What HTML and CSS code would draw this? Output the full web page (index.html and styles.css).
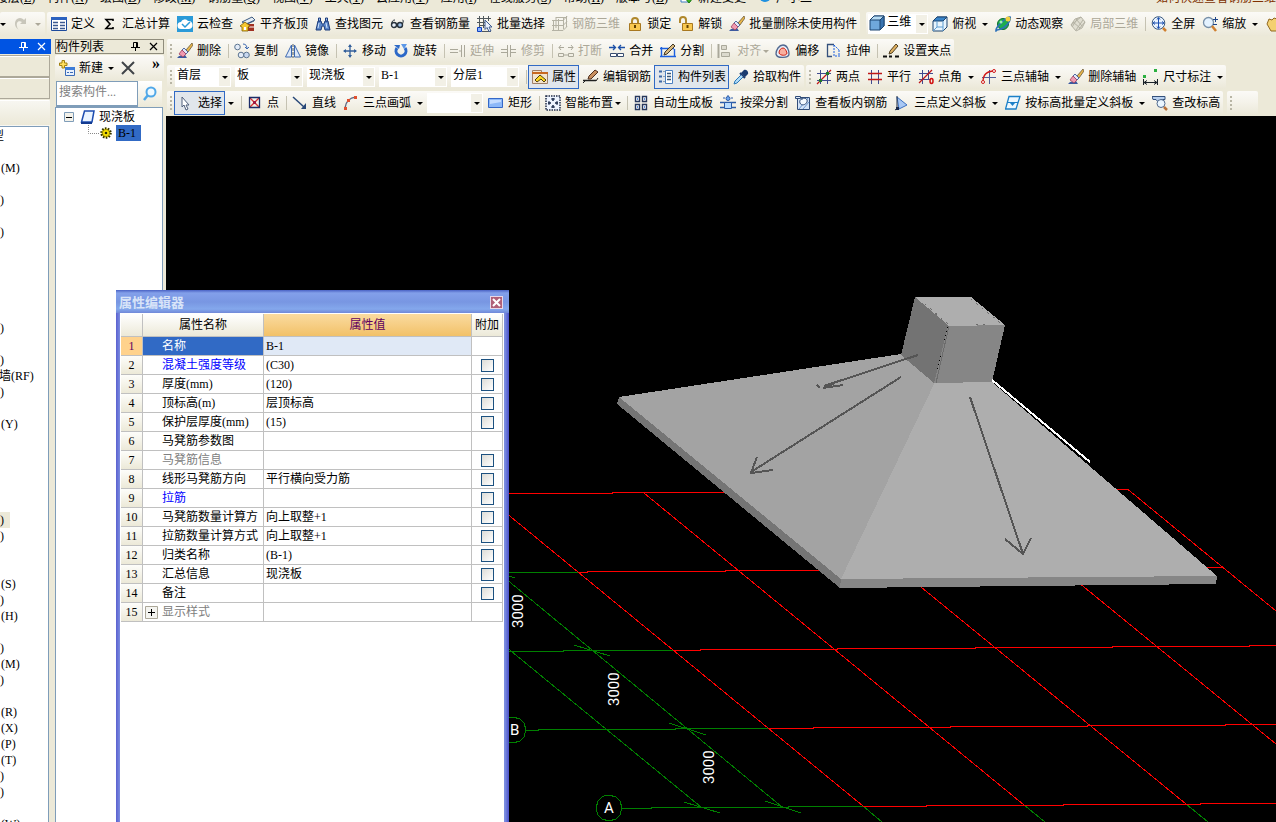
FILE: index.html
```html
<!DOCTYPE html>
<html lang="zh-CN">
<head>
<meta charset="utf-8">
<title>钢筋算量</title>
<link rel="stylesheet" href="styles.css">
</head>
<body>
<svg class="defs" aria-hidden="true">
  <symbol id="brush" viewBox="0 0 16 16"><path d="M0 15h10l-2-3-6 1z" fill="#3c5aa0"/><path d="M15 0L9 7l2 2 5-7z" fill="#e8b64a" stroke="#5a4a30" stroke-width=".7"/><path d="M7 5l4 4-2 2-4-4z" fill="#dfe8f8" stroke="#2c4a90" stroke-width=".8"/><path d="M5 7l4 4-3 3-4-3z" fill="#f09ab0" stroke="#a04060" stroke-width=".8"/></symbol>
  <symbol id="pin" viewBox="0 0 9 9"><path d="M2.500 .5h4v5M2.500 .5v5M5.500 .5v5M0 5.500h9M4.500 5.500v3.500" fill="none" stroke="currentColor"/></symbol>
  <symbol id="cross" viewBox="0 0 9 9"><path d="M1 1l7 7M8 1l-7 7" fill="none" stroke="currentColor" stroke-width="1.200"/></symbol>
  <symbol id="cube" viewBox="0 0 16 16"><path d="M1 5l4-4h10v10l-4 4H1z" fill="#6fa8dc" stroke="#1c4470"/><path d="M1 5l4-4h10l-4 4z" fill="#b8dcf4" stroke="#1c4470"/><path d="M11 5v10l4-4V1z" fill="#3a74b0" stroke="#1c4470"/></symbol>
</svg>

<nav class="menu">
  <span>楼层(<u>L</u>)</span><span>构件(<u>N</u>)</span><span>绘图(<u>D</u>)</span><span>修改(<u>M</u>)</span><span>钢筋量(<u>Q</u>)</span><span>视图(<u>V</u>)</span><span>工具(<u>T</u>)</span><span>云应用(<u>Y</u>)</span><span>应用(<u>I</u>)</span><span>在线服务(<u>S</u>)</span><span>帮助(<u>H</u>)</span><span>版本号(<u>B</u>)</span>
  <span class="mark"><svg width="14" height="14"><path d="M1 1h9v11H1z" fill="#fff" stroke="#3c7ac0"/><path d="M5 8h8l-4 5z" fill="#3cb420" stroke="#1c7a10"/></svg>新建变更</span>
  <span class="mark"><svg width="14" height="14"><circle cx="7" cy="6" r="6" fill="#1e90e0"/></svg>广小二</span>
  <span class="notice">如何快速查看钢筋三维</span>
</nav>

<div class="row top">
  <div class="group lead">
    <button class="drop" aria-label="撤销列表"></button>
    <button class="tool off" aria-label="重做"><svg width="16" height="16"><path d="M13 2v6H7l2-2c-3-2-6 0-5 4 0 2 1 3 2 4-6-3-5-12 1-12 2 0 3 1 4 2z" fill="#c8c6ba"/></svg></button>
    <button class="drop off" aria-label="重做列表"></button>
  </div>
  <div class="group">
    <button class="tool"><svg width="16" height="16"><path d="M.5 1.500h15v13H.5z" fill="#fff" stroke="#1c4a9c"/><path d="M0 1h16v3H0z" fill="#2c62c0"/><path d="M2 6.500h5M2 9.500h5M2 12.500h5M9 6.500h5M9 9.500h5M9 12.500h5" stroke="#3c5a90" stroke-width="1.500"/></svg>定义</button>
    <button class="tool"><svg width="16" height="16"><path d="M11 5V3.500H4L8 8l-4 4.500h7V11" fill="none" stroke="#000" stroke-width="1.600"/></svg>汇总计算</button>
    <button class="tool"><svg width="16" height="16"><path d="M0 0h16v16H0z" fill="#2a9ad8"/><path d="M4 13a3.500 3.500 0 0 1 0-7 4 4 0 0 1 7-1 4 4 0 0 1 1 8z" fill="#fff"/><path d="M5 8l3 3 5-5" fill="none" stroke="#2a9ad8" stroke-width="1.500"/></svg>云检查</button>
    <button class="tool"><svg width="16" height="16"><path d="M2 6l10-5 3 3-9 4z" fill="#e4ecf4" stroke="#3c5a80"/><path d="M5 9l9-4" stroke="#3c5a80"/><path d="M8 8h6v7H8z" fill="#a03020"/><path d="M9 11h5" stroke="#fff"/><path d="M0 10l5-4 5 4-2 1v4H2v-4z" fill="#f6c830" stroke="#806000" stroke-width=".8"/><path d="M4 11h2v3H4z" fill="#fff"/></svg>平齐板顶</button>
    <button class="tool"><svg width="16" height="16"><path d="M1 14l2-9h3l1 3h2l1-3h3l2 9h-5l-1-4H7l-1 4z" fill="#5a86c8" stroke="#1c3c7c"/><path d="M3.500 2h2v3h-2zM10.500 2h2v3h-2z" fill="#9cc0f0" stroke="#1c3c7c"/><path d="M4 7l-1 5M11 7l1 5" stroke="#d0e4ff"/></svg>查找图元</button>
    <button class="tool"><svg width="16" height="16"><circle cx="4" cy="9" r="2.500" fill="#e8f0fa" stroke="#28323c" stroke-width="1.400"/><circle cx="10" cy="9" r="2.500" fill="#9cc0e8" stroke="#28323c" stroke-width="1.400"/><path d="M6 8.500h2M1.500 8C2 5 3 4 5 4M12.500 8c1-3 1-4 0-4" fill="none" stroke="#28323c"/></svg>查看钢筋量</button>
    <button class="tool"><svg width="16" height="16"><path d="M2.500 0v12M6.500 0v12M11.500 0v5M0 2.500h14M0 6.500h8M3 9.500h6M5 15.500h9" stroke="#50585c"/><path d="M.5 11.500h4v4h-4z" fill="#88b4ff" stroke="#1040c0"/><path d="M8 4l7 7H12l2 4-2 .5-2-4-2 2z" fill="#eaf2ff" stroke="#3c5a90"/></svg>批量选择</button>
    <button class="tool off"><svg width="16" height="16"><path d="M1.500 4v11M6.500 3v12M11.500 1v12M14.500 0v11M0 4.500h11l4-4M0 9.500h11l4-4M0 14.500h11l4-4M4 1v11M4 1.500h11" fill="none" stroke="#b4b2a4"/></svg>钢筋三维</button>
    <button class="tool"><svg width="16" height="16"><path d="M5 7V5a3 3 0 0 1 6 0v2" fill="none" stroke="#b0882c" stroke-width="2"/><path d="M2.500 7.500h11v7h-11z" fill="#f8c850" stroke="#a87820"/><path d="M8 9v3" stroke="#604000" stroke-width="2"/></svg>锁定</button>
    <button class="tool"><svg width="16" height="16"><path d="M2 7V4a3 3 0 0 1 6 0v3" fill="none" stroke="#b0882c" stroke-width="2"/><path d="M4.500 7.500h10v7h-10z" fill="#f8c850" stroke="#a87820"/><path d="M9.500 9v3" stroke="#604000" stroke-width="2"/></svg>解锁</button>
    <button class="tool"><svg width="16" height="16"><use href="#brush"/></svg>批量删除未使用构件</button>
  </div>
  <div class="group views">
    <label class="combo view"><svg width="16" height="16"><use href="#cube"/></svg><select aria-label="视图模式"><option>三维</option></select></label>
    <button class="tool"><svg width="16" height="16"><path d="M1 5l4-4h10v10l-4 4H1z" fill="#e8f4fc" stroke="#1c4470"/><path d="M1 5l4-4h10l-4 4z" fill="#3a84c8" stroke="#1c4470"/><path d="M11 5v10M5 5v6l-4 4M5 11h6" stroke="#5c9cd0" fill="none"/></svg>俯视</button><button class="drop" aria-label="俯视选项"></button>
    <button class="tool"><svg width="16" height="16"><circle cx="8" cy="8" r="5.500" fill="#1cae4c" stroke="#0c6c2c"/><path d="M1 15C0 11 13 0 15 1s-3 12-13 13z" fill="none" stroke="#2c70b8" stroke-width="1.500"/><circle cx="13" cy="3" r="2.500" fill="#f0d040"/><circle cx="6" cy="6" r="1.500" fill="#a0f0b0"/></svg>动态观察</button>
    <button class="tool off"><svg width="16" height="16"><path d="M1 9l4-6 6-2 4 5-3 6-6 3z" fill="#e0ded2" stroke="#b4b2a4"/><path d="M3 6l7 6M6 3l6 7M2 11l6-9M6 14l7-10M1 9l10-8M9 13l6-7" fill="none" stroke="#b4b2a4"/></svg>局部三维</button>
    <i class="sep"></i>
    <button class="tool"><svg width="16" height="16"><circle cx="7.500" cy="7" r="6.300" fill="#eaf4ff" stroke="#385880"/><path d="M7.500 2v10M2.500 7h10M6 3.500l1.500-2 1.500 2M6 10.500l1.500 2 1.500-2M4 5.500L2 7l2 1.500M11 5.500L13 7l-2 1.500" fill="none" stroke="#1c50b0"/><path d="M12 12l3 3" stroke="#d08030" stroke-width="2.500"/></svg>全屏</button>
    <button class="tool"><svg width="16" height="16"><circle cx="6.500" cy="6.500" r="5" fill="#e4f2ff" stroke="#7890a8" stroke-width="1.300"/><path d="M10 10l4 5" stroke="#d08030" stroke-width="2.500"/><path d="M11 3.500h5M13.500 1v5M11 8.500h4" stroke="#1c4488"/></svg>缩放</button><button class="drop" aria-label="缩放选项"></button>
    <button class="tool" aria-label="平移"><svg width="16" height="16"><path d="M2 8l2-5 3 1 2-2 3 1 2 3v9H6z" fill="#f4d070" stroke="#906820"/></svg></button>
  </div>
</div>

<div class="work">
  <aside class="dock">
    <header><svg width="9" height="9"><use href="#pin"/></svg><svg width="9" height="9"><use href="#cross"/></svg></header>
    <div class="slot"></div><div class="slot"></div><div class="slot pale"></div>
    <ul>
      <li>型</li><li></li><li class="key">(M)</li><li></li><li>)</li><li></li><li>)</li><li></li><li></li><li></li><li></li><li></li><li>)</li><li></li><li>)</li><li class="wide">墙(RF)</li><li>)</li><li></li><li class="key">(Y)</li><li></li><li></li><li></li><li></li><li></li><li><mark>)</mark></li><li>)</li><li></li><li></li><li class="key">(S)</li><li>)</li><li class="key">(H)</li><li></li><li>)</li><li class="key">(M)</li><li>)</li><li></li><li class="key">(R)</li><li class="key">(X)</li><li class="key">(P)</li><li class="key">(T)</li><li>)</li><li>)</li><li></li><li class="key">(W)</li>
    </ul>
  </aside>

  <aside class="parts">
    <header><span>构件列表</span><svg width="9" height="9"><use href="#pin"/></svg><svg width="9" height="9"><use href="#cross"/></svg></header>
    <div class="group partbar">
      <button class="tool"><svg width="17" height="17"><path d="M6.500 7.500h9v8h-9z" fill="#e8f0fc" stroke="#3c6cb8"/><path d="M6 7h10v3H6z" fill="#3c7cd8"/><path d="M8 12.500h2M11 12.500h3" stroke="#3c6cb8"/><path d="M3 .5h2.500V3H8v2.500H5.500V8H3V5.500H.5V3H3z" fill="#ffe060" stroke="#a08010"/></svg>新建</button><button class="drop slim" aria-label="新建选项"></button>
      <button class="tool" aria-label="删除"><svg width="16" height="16"><path d="M2 2l12 12M14 2L2 14" stroke="#404448" stroke-width="2"/></svg></button>
      <button class="more" aria-label="更多">»</button>
    </div>
    <div class="find"><input type="text" placeholder="搜索构件..." aria-label="搜索构件"><button aria-label="搜索"><svg width="16" height="16"><circle cx="9" cy="6" r="4.500" fill="#f0faff" stroke="#50a8e8" stroke-width="2"/><path d="M6 9l-4 5" stroke="#50a8e8" stroke-width="2.500"/></svg></button></div>
    <div class="tree">
      <div class="node"><svg width="10" height="10"><path d="M.5 .5h9v9h-9z" fill="#f4f2ea" stroke="#7f9db9"/><path d="M2 5.500h6" stroke="#000"/></svg><svg width="15" height="14"><path d="M4.500 1h9.500l-2 11H1.500z" fill="#eaf4ff" stroke="#1c4cb0" stroke-width="1.500"/><path d="M1 13h11" stroke="#123a90" stroke-width="2"/></svg>现浇板</div>
      <div class="node child"><svg width="12" height="16"><path d="M.5 0v8.500h11" fill="none" stroke="#888" stroke-dasharray="1 1"/></svg><svg width="12" height="12"><circle cx="6" cy="6" r="4.500" fill="#ffe600" stroke="#303000" stroke-width="2.500" stroke-dasharray="1.500 1.300"/><circle cx="6" cy="6" r="3.500" fill="#ffe600" stroke="#605800" stroke-width=".5"/><circle cx="6" cy="6" r="1.300" fill="#303000"/></svg><b>B-1</b></div>
    </div>
  </aside>

  <main>
    <div class="row">
      <div class="group"><i class="grip"></i>
        <button class="tool"><svg width="16" height="16"><use href="#brush"/></svg>删除</button><i class="sep"></i>
        <button class="tool"><svg width="16" height="16"><circle cx="3.500" cy="4" r="2.800" fill="#e4ecf8" stroke="#5c7490"/><circle cx="7" cy="12" r="2.800" fill="#e4ecf8" stroke="#5c7490"/><circle cx="12.500" cy="12" r="2.800" fill="#c8d8f0" stroke="#5c7490"/><path d="M9 1c3 0 4 2 4 5M11 4l2 2 2-2" fill="none" stroke="#3c68b0"/></svg>复制</button>
        <button class="tool"><svg width="16" height="16"><path d="M6.500 2v12h-6zM9.500 2v12h6z" fill="#dce8f8" stroke="#3c68b0"/><path d="M8 1v14" stroke="#50585c" stroke-dasharray="3 1"/></svg>镜像</button><i class="sep"></i>
        <button class="tool"><svg width="16" height="16"><path d="M8 2v12M2 8h12" stroke="#34609c" stroke-width="1.300"/><path d="M8 1l2 3H6zM8 15l2-3H6zM1 8l3-2v4zM15 8l-3-2v4z" fill="#34609c"/></svg>移动</button>
        <button class="tool"><svg width="16" height="16"><path d="M4 5a5 5 0 1 0 8 0" fill="none" stroke="#2c68c8" stroke-width="3"/><path d="M8 1h6l-3 5z" fill="#5c98e8"/><path d="M1 2h6L6 6z" fill="#2c68c8"/></svg>旋转</button><i class="sep"></i>
        <button class="tool off"><svg width="16" height="16"><path d="M0 6.500h8M0 9.500h8M11.500 2v12M14.500 2v12M9 8h2" stroke="#aaa89a"/></svg>延伸</button>
        <button class="tool off"><svg width="16" height="16"><path d="M0 6.500h6M0 9.500h6M10 6.500h5M10 9.500h5" stroke="#aaa89a"/><path d="M6.500 2v12M9.500 2v12" stroke="#aaa89a"/></svg>修剪</button><i class="sep"></i>
        <button class="tool off"><svg width="16" height="16"><path d="M1 4.500h5M10 4.500h5M3 2L1 4.500 3 7M13 2l2 2.500L13 7" fill="none" stroke="#aaa89a"/><path d="M.5 10.500h5v3h-5zM10.500 10.500h5v3h-5zM6 12h4" fill="none" stroke="#aaa89a"/></svg>打断</button>
        <button class="tool"><svg width="16" height="16"><path d="M0 4.500h6M16 4.500h-6M4 2l2.500 2.500L4 7M12 2L9.500 4.500 12 7" fill="none" stroke="#1c50a8" stroke-width="1.300"/><path d="M1.500 10.500h6v3h-6zM8.500 10.500h6v3h-6z" fill="#fff" stroke="#384c70"/></svg>合并</button>
        <button class="tool"><svg width="16" height="16"><path d="M0 5.500h14M1.500 4v10M14.500 6v8M0 13.500h16" fill="none" stroke="#1c60e0" stroke-width="1.400"/><path d="M4 12l1-3 8-8 2 2-8 8z" fill="#d8b880" stroke="#403828"/></svg>分割</button><i class="sep"></i>
        <button class="tool off tight"><svg width="16" height="16"><path d="M1.500 1v14" stroke="#aaa89a" stroke-width="2"/><path d="M4.500 2.500h5v4h-5zM4.500 9.500h8v4h-8z" fill="#dcdace" stroke="#aaa89a"/></svg>对齐</button><button class="drop off slim" aria-label="对齐选项"></button>
        <button class="tool"><svg width="16" height="16"><path d="M1 11c0-4 3-9 7-9s6 5 6 9-12 5-13 0z" fill="#e8eef8" stroke="#506890" stroke-width="1.300"/><path d="M4 10c0-3 2-5 4-5s3 2 4 5c0 3-7 3-8 0z" fill="#f8b0a0" stroke="#d02010"/></svg>偏移</button>
        <button class="tool"><svg width="16" height="16"><path d="M8 1.500H1.500v12H6" fill="none" stroke="#34507c" stroke-width="1.300"/><path d="M8 2l5 5M8 2v11h6M13 7v6" fill="none" stroke="#1c60e0" stroke-dasharray="2 1"/></svg>拉伸</button><i class="sep"></i>
        <button class="tool"><svg width="16" height="16"><path d="M0 13.500h4M12 13.500h4M6 13.500h3" stroke="#101010" stroke-width="2"/><path d="M6 11l1-3 6-7 2 2-6 7z" fill="#e0b060" stroke="#504020"/></svg>设置夹点</button>
      </div>
    </div>

    <div class="row">
      <div class="group"><i class="grip"></i>
        <div class="combos">
          <label class="combo floor"><select aria-label="楼层"><option>首层</option></select></label>
          <label class="combo"><select aria-label="构件类型"><option>板</option></select></label>
          <label class="combo"><select aria-label="构件种类"><option>现浇板</option></select></label>
          <label class="combo"><select aria-label="构件"><option>B-1</option></select></label>
          <label class="combo"><select aria-label="分层"><option>分层1</option></select></label>
        </div><i class="sep"></i>
        <button class="tool on"><svg width="16" height="16"><path d="M.5 1.500h9v2h6v11H.5z" fill="#f4e4cc" stroke="#a08068"/><path d="M0 4h16" stroke="#c86820" stroke-width="2"/><path d="M3 11l5-5 6 5-2 2-3-3-4 3z" fill="#ffd820" stroke="#504010"/></svg>属性</button>
        <button class="tool"><svg width="16" height="16"><path d="M0 11.500h13" stroke="#202020" stroke-width="1.500"/><path d="M0 14l3-3M15 9l-2 3" stroke="#202020"/><path d="M5 10l1-3 6-6 3 2-7 7z" fill="#c89060" stroke="#503020"/></svg>编辑钢筋</button>
        <button class="tool on"><svg width="16" height="16"><path d="M7.500 1.500h7v13h-7z" fill="#fff" stroke="#4c80c0"/><path d="M9 4.500h4M9 7.500h4M9 10.500h4" stroke="#3c5878" stroke-width="1.500"/><path d="M1 2.500h3M1 7.500h3M1 12.500h3" stroke="#3c68a8" stroke-width="2"/><path d="M5 2.500h2M5 7.500h2M5 12.500h2" stroke="#90a0b0"/></svg>构件列表</button>
        <button class="tool"><svg width="16" height="16"><path d="M10 2c2-3 6 0 5 3l-3 3-4-4z" fill="#1c3c70"/><path d="M7 4l5 5" stroke="#1c3c70" stroke-width="2"/><path d="M8 6L2 12l-1 3 3-1 6-6" fill="#b0dcf8" stroke="#2c78b8"/></svg>拾取构件</button>
      </div>
      <div class="group next"><i class="grip"></i>
        <button class="tool"><svg width="16" height="16"><path d="M4.500 1v14M11.500 1v14M1 4.500h14M1 11.500h14" stroke="#404c90"/><path d="M1 15L15 1" stroke="#c01818" stroke-width="1.300"/><path d="M3 10h3v3H3zM10 3h3v3h-3z" fill="#207828"/></svg>两点</button>
        <button class="tool"><svg width="16" height="16"><path d="M4.500 1v14M11.500 1v14" stroke="#404c90"/><path d="M1 4.500h14M1 10.500h14" stroke="#c01818" stroke-width="1.400"/></svg>平行</button>
        <button class="tool"><svg width="16" height="16"><path d="M4.500 1v14M10.500 1v9M1 4.500h14M1 10.500h11" stroke="#404c90"/><path d="M1 14L14 1" stroke="#c01818" stroke-width="1.300"/><ellipse cx="13.500" cy="12" rx="1.500" ry="2.500" fill="none" stroke="#d01010" stroke-width="1.500"/></svg>点角</button><button class="drop" aria-label="点角选项"></button>
        <button class="tool"><svg width="16" height="16"><path d="M8.500 1v14M1 8.500h14" stroke="#505c98"/><path d="M2 13C2 6 6 2 13 2" fill="none" stroke="#d01818" stroke-width="1.300"/><circle cx="2" cy="13" r="1.500" fill="#fff" stroke="#d01818"/><circle cx="13" cy="2" r="1.500" fill="#fff" stroke="#d01818"/></svg>三点辅轴</button><button class="drop" aria-label="三点辅轴选项"></button>
        <button class="tool"><svg width="16" height="16"><use href="#brush"/></svg>删除辅轴</button>
        <button class="tool"><svg width="16" height="16"><path d="M0 6h3v3H0zM11 0h3v3h-3z" fill="#2cb040"/><path d="M.5 10v6M14.500 10v6M1 13.500h13M4 11.500l-3 2L4 15.500M11 11.500l3 2-3 2" fill="none" stroke="#182028"/></svg>尺寸标注</button><button class="drop" aria-label="尺寸标注选项"></button>
      </div>
    </div>

    <div class="row">
      <div class="group draw"><i class="grip"></i>
        <button class="tool on"><svg width="16" height="16"><path d="M4 2v10l2-2 2 5 2-1-2-4h3z" fill="#fff" stroke="#50607c"/></svg>选择</button><button class="drop" aria-label="选择选项"></button><i class="sep"></i>
        <button class="tool"><svg width="16" height="16"><path d="M3 3l9 9M12 3l-9 9" stroke="#d83030" stroke-width="1.300"/><path d="M2.500 2.500h10v10h-10z" fill="none" stroke="#1c2c68" stroke-width="1.300"/><path d="M6 6h3v3H6z" fill="#a01840"/></svg>点</button><i class="sep"></i>
        <button class="tool"><svg width="16" height="16"><path d="M1 2l11 10" stroke="#284878" stroke-width="1.500"/><path d="M14 14H9l5-6z" fill="#284878"/></svg>直线</button>
        <button class="tool"><svg width="16" height="16"><path d="M2 13C3 6 6 3 13 2" fill="none" stroke="#606880" stroke-width="1.500"/><path d="M1 12h3v3H1zM4 4h3v3H4zM11 1h3v3h-3z" fill="#e05030"/></svg>三点画弧</button><button class="drop" aria-label="画弧选项"></button>
        <label class="combo arc"><select aria-label="画弧方式"><option></option></select></label>
        <button class="tool"><svg width="16" height="16"><path d="M.5 3.500h14v9H.5z" fill="#8cb8f8" stroke="#3468c8"/><path d="M2 5h11v2L2 9z" fill="#c4dcff"/></svg>矩形</button><i class="sep"></i>
        <button class="tool tight"><svg width="16" height="16"><path d="M1 1h14v14H1z" fill="#eef4ff" stroke="#202c48" stroke-width="1.500" stroke-dasharray="1.500 1"/><path d="M8 3v10M3 8h10" stroke="#182848" stroke-width="1.500" stroke-dasharray="3 4"/><path d="M6 4h4M6 12h4M4 6v4M12 6v4" stroke="#182848"/></svg>智能布置</button><button class="drop slim" aria-label="智能布置选项"></button><i class="sep"></i>
        <button class="tool"><svg width="16" height="16"><path d="M2.500 1.500h4v5h-4zM9.500 1.500h4v5h-4zM2.500 9.500h4v5h-4zM9.500 9.500h4v5h-4z" fill="#fff" stroke="#28385c" stroke-width="1.400"/><path d="M4 3h1v2H4zM11 3h1v2h-1zM4 11h1v2H4zM11 11h1v2h-1z" fill="#5c90e0"/></svg>自动生成板</button>
        <button class="tool"><svg width="16" height="16"><path d="M0 7.500h16M0 12.500h5M11 12.500h5" stroke="#2c5ca8" stroke-width="1.500"/><path d="M4.500 7.500h7v6h-7z" fill="#b8dcff" stroke="#2c5ca8"/><circle cx="8" cy="3.500" r="2" fill="#70a8f0" stroke="#2c5ca8"/><path d="M3 3h2M11 3h2M8 0v1" stroke="#2c5ca8"/></svg>按梁分割</button>
        <button class="tool"><svg width="16" height="16"><path d="M2.500 2.500h12v12h-12z" fill="#d4e4f8" stroke="#304c78"/><path d="M4 14l9-11M8 14l6-7" stroke="#6c98d0"/><path d="M6 4c4-2 7 0 6 3s-6 4-7 1 1-4 3-4" fill="#f4faff" stroke="#304c78"/><path d="M.5 1.500h5v2h-5z" fill="#dce8f8" stroke="#304c78"/></svg>查看板内钢筋</button>
        <button class="tool"><svg width="16" height="16"><path d="M3 2l10 8-8 4z" fill="#a8c8f4" stroke="#3c70c0"/><path d="M3 1v12M1 15l3-2" stroke="#202c40"/><path d="M2 12h3v3H2z" fill="#182848"/></svg>三点定义斜板</button><button class="drop" aria-label="三点定义斜板选项"></button>
        <button class="tool"><svg width="16" height="16"><path d="M4 1.500h11l-4 12.500H.5z" fill="#eef8ff" stroke="#1c80c8" stroke-width="1.300"/><path d="M2 7.500h11" stroke="#1c80c8"/><path d="M5 8h5l-2.500 3z" fill="#1c80c8"/></svg>按标高批量定义斜板</button><button class="drop" aria-label="定义斜板选项"></button>
        <button class="tool"><svg width="16" height="16"><path d="M0 1.500h13v3H9L7 8 4 4.500H1z" fill="#b8d0f0" stroke="#34507c"/><circle cx="9" cy="8.500" r="4" fill="#eaf6ff" stroke="#50688c"/><path d="M12 12l3 3" stroke="#b87038" stroke-width="2.500"/></svg>查改标高</button>
      </div>
      <div class="group blank"><i class="grip"></i></div>
    </div>

    <svg class="scene" viewBox="166 116 1110 706" preserveAspectRatio="xMinYMin slice" role="img" aria-label="现浇板三维视图">
      <g class="axis green">
        <path d="M500 572.500h78M500 651.500h63v-1h110M526 730.500h12v-1h137v-1h94M621 808.500h30v-1h137v-1h75"/>
        <path d="M500 574L782 807M500 642L701 807M863 806l19 16M1024 805l21 17M1186 804l22 18"/>
        <path d="M500 573l15 5M574 645l36 11M669 723l37 12M684 802l36 11M765 801l36 12"/>
        <path d="M508 718l5-1 7 2 4 4 2 7-2 7-4 4-7 2-5-1M604 796l5-1 7 2 4 4 2 7-2 7-4 4-7 2-7-2-4-4-2-7 2-7 4-4z"/>
      </g>
      <g class="axis red">
        <path d="M500 493.500h112v-1h120M1100 489.500h28M578 572.500h9v-1h138v-1h110M1190 567.500h33M673 650.500h27v-1h137v-1h138v-1h137v-1h137v-1h27M769 728.500h44v-1h137v-1h137v-1h138v-1h51M863 806.500h63v-1h137v-1h137v-1h76"/>
        <path d="M500 508L863 806M644 493l380 312M910 578l276 226M1073 578l203 166M1128 489.500L1276 611"/>
      </g>
      <g class="solid">
        <path class="s-left" d="M619 397l282-43 35 28-95 197z"/>
        <path class="s-right" d="M935 382h57l225 194-376 3z"/>
        <path class="s-edge" d="M619 397l222 182-1 9-223-184z"/>
        <path class="s-front" d="M841 579l376-3-1 8-376 4z"/>
        <path class="s-right" d="M915 297h56l34 28-57 1z"/>
        <path class="s-side" d="M915 297l33 28-14 58-33-28z"/>
        <path class="s-front" d="M948 326l57-1-13 57-58 1z"/>
        <path class="s-line" d="M949 326l-13 57"/>
        <path class="s-dots" d="M971 299l32 26M925 304l23 20M976 324h9"/>
        <path class="s-white" d="M992 380l98 82"/>
      </g>
      <g class="arrows">
        <path d="M918 355l-94 31M843 385l-20 3 12-5M817 385l3 3M901 377L751 472M757 457l-6 16 22-3M970 397l53 157M1005 539l18 15 8-16"/>
      </g>
      <g class="dims">
        <text transform="translate(523 628) rotate(-90)">3000</text>
        <text transform="translate(619 706) rotate(-90)">3000</text>
        <text transform="translate(714 784) rotate(-90)">3000</text>
        <text x="510" y="735">B</text>
        <text x="604" y="813">A</text>
      </g>
    </svg>
  </main>
</div>

<section class="dialog" aria-label="属性编辑器">
  <header><h2>属性编辑器</h2><button aria-label="关闭"><svg width="9" height="9"><path d="M1 1l7 7M8 1L1 8" stroke="#fff" stroke-width="2"/></svg></button></header>
  <div class="sheet">
    <table>
      <thead><tr><th class="num"></th><th class="name">属性名称</th><th class="val">属性值</th><th class="add">附加</th></tr></thead>
      <tbody>
        <tr class="sel"><th>1</th><td>名称</td><td>B-1</td><td></td></tr>
        <tr><th>2</th><td class="blue">混凝土强度等级</td><td>(C30)</td><td><input type="checkbox" aria-label="附加 混凝土强度等级"></td></tr>
        <tr><th>3</th><td>厚度(mm)</td><td>(120)</td><td><input type="checkbox" aria-label="附加 厚度"></td></tr>
        <tr><th>4</th><td>顶标高(m)</td><td>层顶标高</td><td><input type="checkbox" aria-label="附加 顶标高"></td></tr>
        <tr><th>5</th><td>保护层厚度(mm)</td><td>(15)</td><td><input type="checkbox" aria-label="附加 保护层厚度"></td></tr>
        <tr><th>6</th><td>马凳筋参数图</td><td></td><td></td></tr>
        <tr><th>7</th><td class="gray">马凳筋信息</td><td></td><td><input type="checkbox" aria-label="附加 马凳筋信息"></td></tr>
        <tr><th>8</th><td>线形马凳筋方向</td><td>平行横向受力筋</td><td><input type="checkbox" aria-label="附加 线形马凳筋方向"></td></tr>
        <tr><th>9</th><td class="blue">拉筋</td><td></td><td><input type="checkbox" aria-label="附加 拉筋"></td></tr>
        <tr><th>10</th><td>马凳筋数量计算方</td><td>向上取整+1</td><td><input type="checkbox" aria-label="附加 马凳筋数量计算方式"></td></tr>
        <tr><th>11</th><td>拉筋数量计算方式</td><td>向上取整+1</td><td><input type="checkbox" aria-label="附加 拉筋数量计算方式"></td></tr>
        <tr><th>12</th><td>归类名称</td><td>(B-1)</td><td><input type="checkbox" aria-label="附加 归类名称"></td></tr>
        <tr><th>13</th><td>汇总信息</td><td>现浇板</td><td><input type="checkbox" aria-label="附加 汇总信息"></td></tr>
        <tr><th>14</th><td>备注</td><td></td><td><input type="checkbox" aria-label="附加 备注"></td></tr>
        <tr><th>15</th><td class="gray fold"><div><button aria-label="展开"><svg width="13" height="13"><path d="M.5 .5h12v12H.5z" fill="#f4f4f0" stroke="#aca899"/><path d="M3 6.500h7M6.500 3v7" stroke="#000"/></svg></button>显示样式</div></td><td></td><td></td></tr>
      </tbody>
    </table>
  </div>
</section>
</body>
</html>
```
FILE: styles.css
```css
* { box-sizing: border-box; }

body {
  margin: 0;
  height: 100vh;
  overflow: hidden;
  display: flex;
  flex-direction: column;
  background: #ece9d8;
  color: #000;
  font: 12px/16px "Liberation Serif", "Noto Sans CJK SC", serif;
}

button, select, input {
  margin: 0;
  padding: 0;
  border: 0;
  border-radius: 0;
  background: none;
  color: inherit;
  font: inherit;
}

svg { flex: none; display: block; }
.defs { position: absolute; width: 0; height: 0; }

/* menu strip */
.menu {
  display: flex;
  align-items: flex-end;
  gap: 12px;
  height: 12px;
  padding-bottom: 6px;
  overflow: hidden;
  white-space: nowrap;
  flex: none;
}
.menu span:first-child { margin-left: -4px; }
.menu .mark { display: flex; gap: 4px; }
.menu .notice { margin-left: auto; color: #803000; }

/* toolbars */
.row { display: flex; height: 24px; flex: none; padding-left: 1px; white-space: nowrap; overflow: hidden; }
.row.top { padding-left: 0; margin-bottom: 3px; }
.group {
  display: flex;
  align-items: stretch;
  flex: none;
  padding-left: 3px;
  border-radius: 2px;
  background: linear-gradient(#fbfaf7, #f4f2e9 50%, #ebe8d8);
}
.group.lead { width: 45px; padding-left: 0; margin-right: 2px; overflow: hidden; }
.group.lead .drop:first-child { margin-left: -3px; }
.row.top .group:nth-child(2) { padding-left: 0; }
.group.views { margin-left: 6px; padding-left: 2px; }
.group.next { margin-left: 2px; }
.group.blank { margin-left: 4px; width: 31px; }
.group.draw .grip { margin-right: 2px; }

.tool {
  display: flex;
  align-items: center;
  gap: 4px;
  padding: 0 3px 0 4px;
  white-space: nowrap;
}
.tool.on { padding: 0 2px 0 3px; border: 1px solid #316ac5; background: #e1e6ec; }
.tool.tight { padding-right: 0; }
.off { color: #aca899; }

.drop { width: 12px; flex: none; display: flex; align-items: center; justify-content: center; }
.drop.slim { width: 10px; }
.drop::before, .combo::after { content: ""; border: solid transparent; border-width: 3px 3px 0; border-top-color: #000; }
.drop.off::before { border-top-color: #aca899; }

.sep { width: 1px; margin: 5px 1px 5px 4px; background: #c5c2b2; }
.grip { width: 2px; margin: 5px 1px 5px 0; background: repeating-linear-gradient(#b8b5a5 0 2px, transparent 2px 4px); }

.combos { display: flex; gap: 4px; margin: 0 3px 0 2px; }
.combo { position: relative; width: 68px; margin: 2px 0; display: flex; background: #fff; }
.combo.floor { width: 56px; }
.combo.arc { width: 56px; margin-left: 1px; margin-right: 1px; }
.combo.view { width: 60px; margin: 2px 0; }
.combo.view svg { position: absolute; left: 1px; top: 1px; }
.combo.view select { padding-left: 19px; }
.combo select { flex: 1; min-width: 0; appearance: none; padding: 0 12px 4px 2px; }
.combo::before { content: ""; position: absolute; right: 1px; top: 1px; bottom: 1px; width: 11px; background: #f2f0e6; }
.combo::after { position: absolute; right: 3px; top: 9px; }

/* work area */
.work { flex: 1; min-height: 0; display: flex; }

.dock { width: 51px; flex: none; display: flex; flex-direction: column; overflow: hidden; padding-right: 1px; }
.dock header {
  display: flex;
  align-items: center;
  justify-content: flex-end;
  gap: 9px;
  height: 15px;
  margin: 0 -1px 1px 0;
  padding-right: 5px;
  background: #0054e3;
  color: #fff;
  flex: none;
}
.slot { height: 22px; flex: none; border: solid #aca899; border-width: 1px 1px 1px 0; box-shadow: inset 0 1px #fff; }
.slot.pale { height: 27px; border-color: transparent; background: linear-gradient(#f8f7f2, #ece9d8); }
.dock ul {
  flex: 1;
  min-height: 0;
  margin: 0 1px 0 0;
  padding: 1px 0 0;
  list-style: none;
  overflow: hidden;
  background: #fff;
  border: solid #7f9db9;
  border-width: 1px 1px 0 0;
}
.dock li { height: 16px; white-space: nowrap; }
.dock li:first-child { text-indent: -8px; }
.dock li.wide { text-indent: -1px; }
.dock li.key { padding-left: 1px; }
.dock mark { display: inline-block; width: 10px; background: #ece9d8; color: #000; }

.parts { width: 109px; margin: 0 2px 0 4px; flex: none; display: flex; flex-direction: column; }
.parts header {
  display: flex;
  align-items: center;
  gap: 9px;
  height: 15px;
  padding-right: 5px;
  border: 1px solid #8f8c7c;
  flex: none;
}
.parts header span { flex: 1; white-space: nowrap; }
.partbar { height: 26px; margin-top: 1px; padding-left: 0; }
.partbar .tool { gap: 3px; }
.more { margin: 0 4px 8px auto; font-size: 16px; font-weight: bold; line-height: 12px; }
.find { display: flex; height: 26px; flex: none; margin: 0 2px 0 1px; }
.find input { flex: 1; min-width: 0; border: 1px solid #7f9db9; border-width: 1px 1px 2px; background: #fff; padding: 0 2px 4px; }
.find input::placeholder { color: #808080; opacity: 1; }
.find button { width: 24px; display: flex; align-items: center; justify-content: center; background: linear-gradient(#fff, #ece9d8); }
.tree { flex: 1; min-height: 0; margin: 0 1px 0 0; padding-top: 1px; background: #fff; border: 1px solid #7f9db9; border-bottom: 0; }
.node { display: flex; align-items: center; height: 16px; gap: 4px; padding-left: 8px; }
.node svg + svg { margin-left: 2px; }
.node.child { gap: 0; padding-left: 32px; }
.node.child svg + svg { margin: 0 4px 0 0; }
.node b { width: 25px; padding-left: 2px; background: #316ac5; font-weight: normal; }

main { flex: 1; min-width: 0; display: flex; flex-direction: column; gap: 2px; }
.scene { flex: 1; min-height: 0; width: 100%; margin-top: -1px; background: #000; }
.axis { fill: none; stroke-width: 1; shape-rendering: crispEdges; }
.green { stroke: #008000; }
.red { stroke: #f00; }
.solid { shape-rendering: crispEdges; }
.s-left { fill: #a3a3a3; }
.s-right { fill: #aeaeae; }
.s-edge { fill: #757575; }
.s-front { fill: #868686; }
.s-side { fill: #737373; }
.s-line { fill: none; stroke: #6c6c6c; }
.s-dots { fill: none; stroke: #6c6c6c; stroke-dasharray: 2 5; }
.s-white { stroke: #fff; stroke-width: 2; }
.arrows { fill: none; stroke: #555; stroke-width: 2; shape-rendering: crispEdges; }
.dims { fill: #fff; font: 15px Roboto, sans-serif; }

/* property editor */
.dialog {
  position: absolute;
  left: 116px;
  top: 290px;
  bottom: 0;
  width: 393px;
  padding: 0 5px 0 4px;
  display: flex;
  flex-direction: column;
  background: linear-gradient(90deg, #5a60d0, #7b8de0 4px, #7b8de0 389px, #4a50c8);
}
.dialog header {
  display: flex;
  align-items: center;
  justify-content: space-between;
  height: 23px;
  margin: 0 -5px 0 -4px;
  padding: 2px 6px 0 3px;
  background: linear-gradient(#4a62c4, #83a0ea 3px, #7896e2 12px, #84a8ec 19px, #7088d8);
  flex: none;
}
.dialog h2 { margin: 0; font-size: 13px; line-height: 18px; color: #d8e4f8; }
.dialog header button { width: 13px; height: 13px; display: flex; align-items: center; justify-content: center; border: 1px solid #e8d8e8; background: #b06078; }
.sheet { flex: 1; background: #fff; padding: 1px 0 0 1px; }
table { border-collapse: separate; border-spacing: 0; table-layout: fixed; width: 382px; }
tr { height: 19px; }
th, td { height: 19px; padding: 0; border: solid #c0c0c0; border-width: 0 1px 1px 0; line-height: 16px; white-space: nowrap; overflow: hidden; font-weight: normal; }
thead th { height: 23px; background: linear-gradient(#fff, #ece9d8); }
.num { width: 22px; }
.name { width: 121px; }
.add { width: 31px; }
thead .val { background: linear-gradient(#fadba0, #f2c168); color: #600060; }
tbody th { background: linear-gradient(#fdfdfa, #ece9d8); }
tbody td:nth-child(2) { padding-left: 19px; }
tbody td:nth-child(3) { padding-left: 2px; }
tbody td:nth-child(4) { line-height: 0; text-align: center; }
.sel th { background: #ffd28c; color: #600060; }
.sel td:nth-child(2) { background: #316ac5; color: #fff; }
.sel td:nth-child(3) { background: #e0e9f6; }
.blue { color: #00f; }
.gray { color: #808080; }
input[type="checkbox"] { appearance: none; width: 13px; height: 13px; border: 1px solid #1c5180; background: linear-gradient(135deg, #dcdcd7, #fff); vertical-align: middle; }
tbody td.fold:nth-child(2) { padding-left: 2px; }
.fold div { display: flex; align-items: center; gap: 4px; }
```
